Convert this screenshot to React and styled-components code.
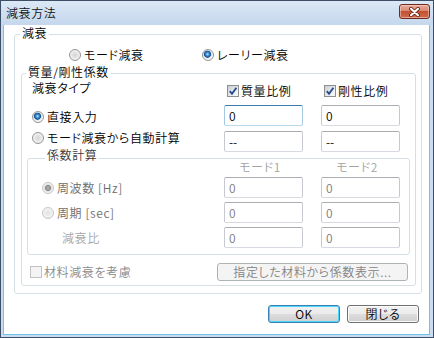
import React from "react";
import styled, { createGlobalStyle } from "styled-components";

const GlobalStyle = createGlobalStyle`
  html, body {
    margin: 0;
    padding: 0;
    background: #fff;
  }
  body {
    font-family: "Noto Sans CJK JP", "Noto Sans", sans-serif;
    font-size: 12px;
    font-weight: 350;
    line-height: 14px;
    color: #000;
    font-feature-settings: "palt";
    letter-spacing: 0.6px;
  }
  * {
    box-sizing: border-box;
  }
`;

const Window = styled.div`
  width: 434px;
  height: 338px;
  display: flex;
  flex-direction: column;
  border: 1px solid #3d4f66;
  background: #c9dcf0;
`;

const TitleBar = styled.div`
  height: 24px;
  flex: none;
  display: flex;
  align-items: flex-start;
  justify-content: space-between;
  padding: 3px 3px 0 5px;
  background: linear-gradient(#dce8f5, #c4d7ed);
`;

const Title = styled.div`
  padding-top: 2px;
  line-height: 14px;
  color: #111;
`;

const CloseButton = styled.div`
  width: 31px;
  height: 15px;
  display: flex;
  align-items: center;
  justify-content: center;
  border: 1px solid #6e2b1f;
  border-radius: 3px;
  background: linear-gradient(#e9ab9a, #d98a74 45%, #c4502f 50%, #d06b4f);
  box-shadow: inset 0 0 0 1px rgba(255, 220, 210, 0.5);
`;

const Client = styled.div`
  flex: 1;
  margin: 0 3px 2px 2px;
  background: #fff;
  border: 1px solid #6cc3e8;
  border-top: none;
  border-left-color: #9ab4d0;
  padding: 9px 7px 0 10px;
`;

const GroupBox = styled.div`
  border: 1px solid #d5dfe5;
  border-radius: 3px;
  padding: ${p => p.$pad};
  margin-top: ${p => p.$mt || 0}px;
`;

const Caption = styled.div`
  width: fit-content;
  margin: ${p => p.$mt || -8}px 0 0 ${p => p.$ml || 0}px;
  padding: 0 2px;
  background: #fff;
  line-height: 12px;
  color: ${p => p.$color || "#000"};
`;

const ModeRow = styled.div`
  margin-top: 9px;
  height: 14px;
  display: grid;
  grid-template-columns: 133px auto;
  padding-left: 48px;
  align-items: center;
`;

const Option = styled.div`
  display: flex;
  align-items: center;
  gap: ${p => p.$gap || 3}px;
  padding-left: ${p => p.$indent || 0}px;
  color: ${p => p.$color || "#000"};
  white-space: nowrap;
  line-height: 14px;
`;

const RadioStack = styled.div`
  grid-row: span 2;
  align-self: start;
  display: flex;
  flex-direction: column;
  gap: 7px;
  padding-top: 5px;
`;

const Radio = styled.span`
  flex: none;
  width: 12px;
  height: 12px;
  border-radius: 50%;
  border: 1px solid ${p => (p.$disabled ? "#c6c6c6" : "#959595")};
  background: ${p =>
    p.$checked
      ? p.$disabled
        ? "radial-gradient(circle at 50% 50%, #b4b4b4 0, #8e8e8e 2.6px, #d6d6d6 3.4px, #eeeeee 4px, #f7f7f7 100%)"
        : "radial-gradient(circle at 45% 42%, #b8ecff 0, #3b92d6 1.6px, #16508f 3.2px, #cfd8df 3.8px, #eef0f2 4.4px, #fbfbfb 100%)"
      : p.$disabled
      ? "radial-gradient(circle at 50% 50%, #e2e2e2 0, #ededed 3px, #f8f8f8 100%)"
      : "radial-gradient(circle at 50% 50%, #d4d4d4 0, #e6e6e6 3px, #fdfdfd 100%)"};
`;

const CheckBox = styled.span`
  flex: none;
  width: 12px;
  height: 12px;
  display: flex;
  align-items: center;
  justify-content: center;
  border: 1px solid ${p => (p.$disabled ? "#c2c2c2" : "#8e8f8f")};
  background: ${p =>
    p.$disabled
      ? "#f4f4f4"
      : "linear-gradient(135deg, #c9ced6, #eef0f4 70%, #fafafa)"};
`;

const Check = () => (
  <svg width="10" height="10" viewBox="0 0 10 10">
    <path
      d="M1.8 5.2 L4 7.8 L8.4 1.8"
      fill="none"
      stroke="#27488a"
      strokeWidth="1.8"
    />
  </svg>
);

const TypeGrid = styled.div`
  margin-top: 3px;
  padding: 0 10px 0 5px;
  display: grid;
  grid-template-columns: 1fr 79px 79px;
  grid-template-rows: 19px 21px 21px;
  column-gap: 18px;
  row-gap: 5px;
  align-items: center;
`;

const CoefGrid = styled.div`
  display: grid;
  grid-template-columns: 1fr 79px 79px;
  grid-template-rows: 12px 21px 21px 21px;
  column-gap: 18px;
  row-gap: 4px;
  align-items: center;
`;

const TopCell = styled.div`
  align-self: start;
  line-height: 14px;
`;

const ColumnHead = styled.div`
  line-height: 12px;
  text-align: center;
  padding-right: 7px;
  color: #a2a2a2;
`;

const Field = styled.input`
  width: 79px;
  height: 21px;
  margin: 0;
  border: 1px solid;
  border-color: ${p =>
    p.$focused ? "#3d7bad #a4c9e3 #b7d9ed #a4c9e3" : "#abadb3 #c6c9cf #d6dae0 #c6c9cf"};
  border-radius: 2px;
  padding: 0 4px 1px;
  font-family: inherit;
  font-weight: 350;
  font-size: 12px;
  color: ${p => (p.$dim ? "#7a7a7a" : "#000")};
  background: #fff;
  outline: none;
`;

const MaterialRow = styled.div`
  margin-top: 8px;
  height: 18px;
  display: flex;
  align-items: center;
  justify-content: space-between;
  padding: 0 2px 0 3px;
`;

const Footer = styled.div`
  margin-top: 11px;
  display: flex;
  justify-content: flex-end;
  gap: 7px;
  padding-right: 3px;
`;

const Button = styled.div`
  width: ${p => p.$w || 72}px;
  height: 18px;
  display: flex;
  align-items: center;
  justify-content: center;
  border: 1px solid ${p => (p.$disabled ? "#adb2b5" : p.$default ? "#3c7fb1" : "#707070")};
  border-radius: 3px;
  line-height: 14px;
  color: ${p => (p.$disabled ? "#838383" : "#000")};
  background: ${p =>
    p.$disabled
      ? "#f4f4f4"
      : "linear-gradient(#f2f2f2, #ebebeb 48%, #dddddd 52%, #cfcfcf)"};
  box-shadow: ${p =>
    p.$default ? "inset 0 0 0 1px #48d8ff" : p.$disabled ? "none" : "inset 0 0 0 1px #fcfcfc"};
`;

export default function App() {
  return (
    <>
      <GlobalStyle />
      <Window>
        <TitleBar>
          <Title>減衰方法</Title>
          <CloseButton>
            <svg width="13" height="10" viewBox="0 0 13 10">
              <path
                d="M3 1.8 L10 8.2 M10 1.8 L3 8.2"
                stroke="#6b2415"
                strokeWidth="3.8"
                strokeLinecap="round"
              />
              <path
                d="M3 1.8 L10 8.2 M10 1.8 L3 8.2"
                stroke="#fff"
                strokeWidth="2.1"
                strokeLinecap="round"
              />
            </svg>
          </CloseButton>
        </TitleBar>
        <Client>
          <GroupBox $pad="0 5px 7px 6px">
            <Caption $ml={-1}>減衰</Caption>
            <ModeRow>
              <Option>
                <Radio />
                モード減衰
              </Option>
              <Option>
                <Radio $checked />
                レーリー減衰
              </Option>
            </ModeRow>

            <GroupBox $pad="0 5px 4px 5px" $mt={11}>
              <Caption $ml={-1}>質量/剛性係数</Caption>
              <TypeGrid>
                <TopCell>減衰タイプ</TopCell>
                <Option $gap={2} $indent={3}>
                  <CheckBox>
                    <Check />
                  </CheckBox>
                  質量比例
                </Option>
                <Option $gap={2} $indent={3}>
                  <CheckBox>
                    <Check />
                  </CheckBox>
                  剛性比例
                </Option>

                <RadioStack>
                  <Option>
                    <Radio $checked />
                    直接入力
                  </Option>
                  <Option>
                    <Radio />
                    モード減衰から自動計算
                  </Option>
                </RadioStack>
                <Field readOnly value="0" $focused />
                <Field readOnly value="0" />
                <Field readOnly value="--" />
                <Field readOnly value="--" />
              </TypeGrid>

              <GroupBox $pad="0 9px 6px 14px" $mt={6}>
                <Caption $ml={3} $mt={-10} $color="#3a3a3a">
                  係数計算
                </Caption>
                <CoefGrid>
                  <span />
                  <ColumnHead>モード1</ColumnHead>
                  <ColumnHead>モード2</ColumnHead>

                  <Option $color="#6d6d6d">
                    <Radio $checked $disabled />
                    周波数 [Hz]
                  </Option>
                  <Field readOnly value="0" $dim />
                  <Field readOnly value="0" $dim />

                  <Option $color="#6d6d6d">
                    <Radio $disabled />
                    周期 [sec]
                  </Option>
                  <Field readOnly value="0" $dim />
                  <Field readOnly value="0" $dim />

                  <Option $color="#a6a6a6" $indent={20}>
                    減衰比
                  </Option>
                  <Field readOnly value="0" $dim />
                  <Field readOnly value="0" $dim />
                </CoefGrid>
              </GroupBox>

              <MaterialRow>
                <Option $gap={2} $color="#8a8a8a">
                  <CheckBox $disabled />
                  材料減衰を考慮
                </Option>
                <Button $disabled $w={191}>
                  指定した材料から係数表示...
                </Button>
              </MaterialRow>
            </GroupBox>
          </GroupBox>

          <Footer>
            <Button $default>OK</Button>
            <Button>閉じる</Button>
          </Footer>
        </Client>
      </Window>
    </>
  );
}
